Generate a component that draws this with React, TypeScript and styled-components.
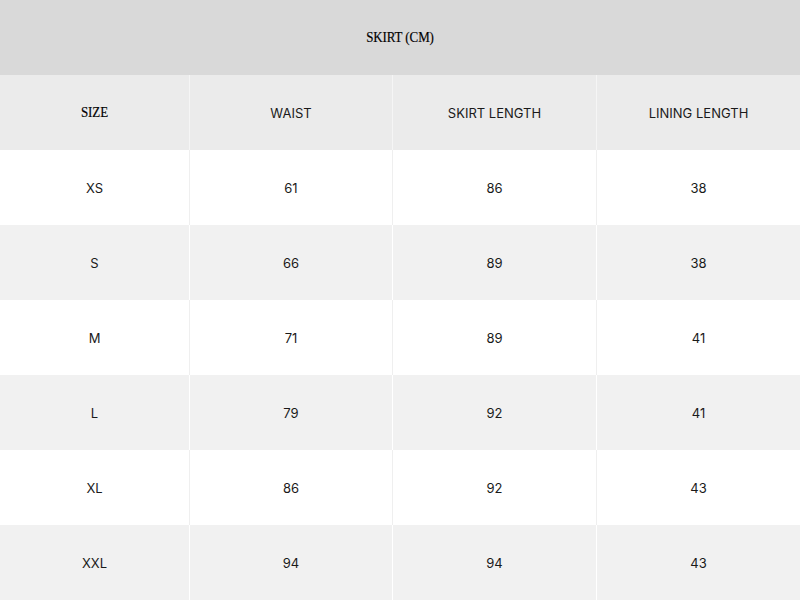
import styled, { createGlobalStyle } from "styled-components";

const GlobalStyle = createGlobalStyle`
  html, body {
    margin: 0;
    padding: 0;
    background: #ffffff;
  }
`;

const Table = styled.div`
  width: 800px;
  display: grid;
  grid-template-columns: 190px 203px 204px 203px;
  font-family: Inter, "Liberation Sans", sans-serif;
  color: #1a1a1a;
`;

const SerifText = styled.span`
  display: inline-block;
  font-family: "Liberation Serif", "DejaVu Serif", serif;
  font-size: 13px;
  letter-spacing: -0.1px;
  color: #000;
  -webkit-text-stroke: 0.15px #000;
  transform: scaleY(1.12);
`;

const Title = styled.div`
  grid-column: 1 / -1;
  height: 75px;
  background: #d9d9d9;
  display: flex;
  align-items: center;
  justify-content: center;
`;

const Cell = styled.div<{ $bg: string; $line: string; $last?: boolean }>`
  height: 75px;
  box-sizing: border-box;
  background: ${(p) => p.$bg};
  border-right: ${(p) => (p.$last ? "none" : `1px solid ${p.$line}`)};
  display: flex;
  align-items: center;
  justify-content: center;
  font-size: 13px;
  font-family: Inter, "Liberation Sans", sans-serif;
  color: #1a1a1a;
`;

const headers = ["SIZE", "WAIST", "SKIRT LENGTH", "LINING LENGTH"];

const rows: string[][] = [
  ["XS", "61", "86", "38"],
  ["S", "66", "89", "38"],
  ["M", "71", "89", "41"],
  ["L", "79", "92", "41"],
  ["XL", "86", "92", "43"],
  ["XXL", "94", "94", "43"],
];

export default function App() {
  return (
    <>
      <GlobalStyle />
      <Table>
        <Title>
          <SerifText>SKIRT (CM)</SerifText>
        </Title>
        {headers.map((h, i) => (
          <Cell key={h} $bg="#ebebeb" $line="#f5f5f5" $last={i === 3}>
            {i === 0 ? <SerifText>{h}</SerifText> : h}
          </Cell>
        ))}
        {rows.map((row, r) =>
          row.map((v, c) => {
            const gray = r % 2 === 1;
            return (
              <Cell
                key={`${r}-${c}`}
                $bg={gray ? "#f1f1f1" : "#ffffff"}
                $line={gray ? "#ffffff" : "#efefef"}
                $last={c === 3}
              >
                {v}
              </Cell>
            );
          })
        )}
      </Table>
    </>
  );
}
